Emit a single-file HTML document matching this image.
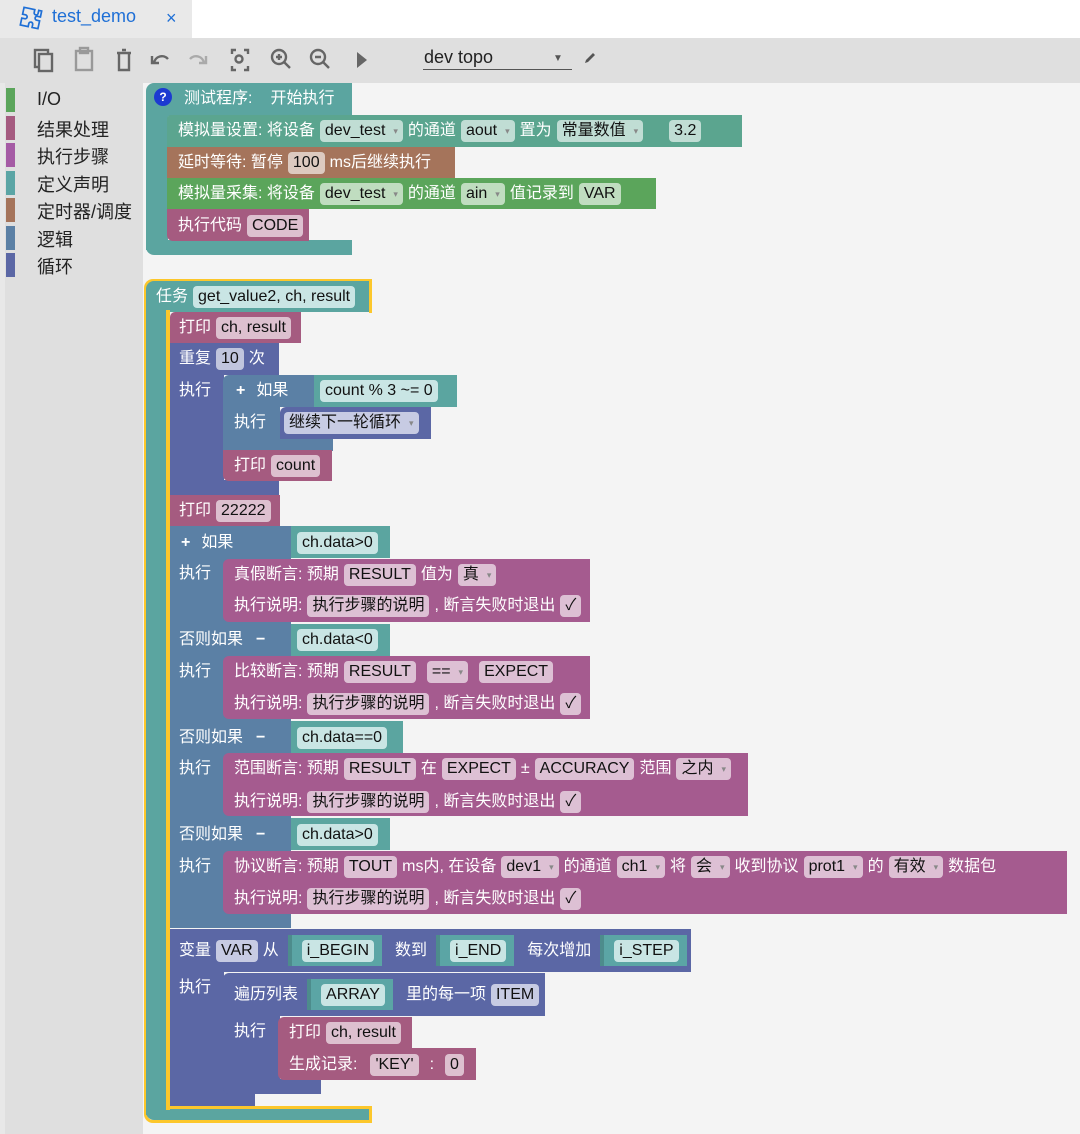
<!DOCTYPE html>
<html><head><meta charset="utf-8">
<style>
*{margin:0;padding:0;box-sizing:border-box}
body{width:1080px;height:1134px;overflow:hidden;background:#f4f4f4;font-family:"Liberation Sans","Noto Sans CJK SC",sans-serif;position:relative}
.a{position:absolute}
.r{position:absolute;display:flex;align-items:center;height:31px;color:#fff;font-size:16px;white-space:nowrap;gap:5px}
.r span{line-height:22px;height:22px;display:inline-flex;align-items:center}
.f{background:rgba(255,255,255,.62);color:#111;border-radius:4px;padding:0 5px;font-size:16px}
.dd:after{content:"▾";font-size:9px;color:#888;margin-left:8px}
.r span.v{display:inline-flex;align-items:center;height:31px;background:#5ba5a5;padding:0 8px 0 10px;margin-left:4px;border-left:4px solid rgba(0,0,0,.15)}
.v .f{background:#c9e5e4}
.cat{position:absolute;left:6px;width:9px;height:24px}
.cl{position:absolute;left:37px;font-size:18px;color:#222}
.y{position:absolute;background:#fcc72b}
</style></head><body>
<!-- top bar -->
<div class="a" style="left:0;top:0;width:1080px;height:38px;background:#fff"></div>
<div class="a" style="left:0;top:0;width:192px;height:38px;background:#e9e9e9"></div>
<svg class="a" style="left:19px;top:6px" width="24" height="24" viewBox="0 0 24 24"><path d="M9 3h5v3a2 2 0 0 0 4 0V3h3v6h-3a2 2 0 0 0 0 4h3v8h-6v-3a2 2 0 0 0-4 0v3H3v-7h3a2 2 0 0 0 0-4H3V3h6z" fill="none" stroke="#1e6fd6" stroke-width="1.7" transform="rotate(12 12 12)"/></svg>
<div class="a" style="left:52px;top:6px;font-size:18px;color:#1e6fd6">test_demo</div>
<div class="a" style="left:166px;top:8px;font-size:18px;color:#1e6fd6">×</div>
<!-- toolbar -->
<div class="a" style="left:0;top:38px;width:1080px;height:45px;background:#dfdfdf"></div>
<svg class="a" style="left:30px;top:44px" width="360" height="32" viewBox="0 0 360 32" fill="none" stroke="#666" stroke-width="2.4">
<rect x="5" y="6" width="13" height="17"/><rect x="9" y="10" width="13" height="17" fill="#dfdfdf"/>
<rect x="46" y="7" width="16" height="19" stroke="#999"/><rect x="50" y="4" width="8" height="5" stroke="#999"/>
<path d="M87 9h14M89 10v16h10V10M92 6h4"/>
<path d="M124 19a8 8 0 0 1 14-4M122 12v7h7"/>
<path d="M174 19a8 8 0 0 0-14-4M176 12v7h-7" stroke="#aaa"/>
<path d="M202 10V6h4M214 6h4v4M218 22v4h-4M206 26h-4v-4"/><circle cx="209" cy="15" r="3.5"/>
<circle cx="249" cy="13" r="7"/><path d="M254 18l6 6M246 13h6M249 10v6"/>
<circle cx="288" cy="13" r="7"/><path d="M293 18l6 6M285 13h6"/>
<path d="M327 8l10 8-10 8z" fill="#666" stroke="none"/>
</svg>
<div class="a" style="left:424px;top:47px;font-size:18px;color:#222">dev&nbsp;topo</div>
<div class="a" style="left:423px;top:69px;width:149px;height:1px;background:#555"></div>
<div class="a" style="left:553px;top:53px;font-size:10px;color:#555">▼</div>
<svg class="a" style="left:582px;top:50px" width="16" height="16"><path d="M3 13l1-3 7-7 2 2-7 7z" fill="#555"/></svg>
<!-- sidebar -->
<div class="a" style="left:0;top:83px;width:5px;height:1051px;background:#e8e8e8"></div>
<div class="a" style="left:5px;top:83px;width:138px;height:1051px;background:#dfdfdf"></div>
<div class="cat" style="top:88px;background:#5ba55b"></div><div class="cl" style="top:89px">I/O</div>
<div class="cat" style="top:116px;background:#a55b80"></div><div class="cl" style="top:116px">结果处理</div>
<div class="cat" style="top:143px;background:#a55ba5"></div><div class="cl" style="top:143px">执行步骤</div>
<div class="cat" style="top:171px;background:#5ba5a5"></div><div class="cl" style="top:171px">定义声明</div>
<div class="cat" style="top:198px;background:#a5745b"></div><div class="cl" style="top:198px">定时器/调度</div>
<div class="cat" style="top:226px;background:#5b80a5"></div><div class="cl" style="top:226px">逻辑</div>
<div class="cat" style="top:253px;background:#5b67a5"></div><div class="cl" style="top:253px">循环</div>

<!-- program block -->
<div class="a" style="left:146px;top:83px;width:206px;height:33px;background:#5ba5a0;border-radius:8px 0 0 0"></div>
<div class="a" style="left:146px;top:110px;width:22px;height:140px;background:#5ba5a0"></div>
<div class="a" style="left:146px;top:240px;width:206px;height:15px;background:#5ba5a0;border-radius:0 0 0 8px"></div>
<div class="a" style="left:154px;top:88px;width:18px;height:18px;border-radius:50%;background:#1c3ad1;color:#fff;font-size:12px;font-weight:bold;text-align:center;line-height:18px">?</div>
<div class="r" style="left:184px;top:83px;gap:18px"><span>测试程序:</span><span>开始执行</span></div>
<div class="a" style="left:167px;top:115px;width:575px;height:32px;background:#5ba58f;border-radius:4px 0 0 0"></div>
<div class="r" style="left:178px;top:115px"><span>模拟量设置: 将设备</span><span class="f dd">dev_test</span><span>的通道</span><span class="f dd">aout</span><span>置为</span><span class="f dd">常量数值</span><span style="width:16px"></span><span class="f">3.2</span></div>
<div class="a" style="left:167px;top:147px;width:288px;height:31px;background:#a5745b"></div>
<div class="r" style="left:178px;top:147px"><span>延时等待: 暂停</span><span class="f">100</span><span>ms后继续执行</span></div>
<div class="a" style="left:167px;top:178px;width:489px;height:31px;background:#5ba55b"></div>
<div class="r" style="left:178px;top:178px"><span>模拟量采集: 将设备</span><span class="f dd">dev_test</span><span>的通道</span><span class="f dd">ain</span><span>值记录到</span><span class="f">VAR</span></div>
<div class="a" style="left:167px;top:209px;width:142px;height:32px;background:#a55b80;border-radius:0 0 0 6px"></div>
<div class="r" style="left:178px;top:210px"><span>执行代码</span><span class="f">CODE</span></div>

<!-- task block -->
<div class="a" style="left:144px;top:279px;width:228px;height:844px;border:3px solid #fcc72b;border-right:none;border-radius:9px 0 0 9px"></div>
<div class="a" style="left:146px;top:281px;width:224px;height:31px;background:#5ba5a0;border-radius:8px 0 0 0"></div>
<div class="a" style="left:146px;top:305px;width:22px;height:810px;background:#5ba5a0"></div>
<div class="a" style="left:146px;top:1108px;width:224px;height:12px;background:#5ba5a0;border-radius:0 0 0 8px"></div>
<div class="y" style="left:369px;top:279px;width:3px;height:34px"></div>
<div class="y" style="left:166px;top:310px;width:206px;height:3px;display:none"></div>
<div class="y" style="left:166px;top:310px;width:4px;height:800px"></div>
<div class="y" style="left:166px;top:1106px;width:206px;height:3px"></div>
<div class="y" style="left:369px;top:1106px;width:3px;height:17px"></div>
<div class="r" style="left:156px;top:281px"><span>任务</span><span class="f" style="background:#c9e5e4">get_value2, ch, result</span></div>

<!-- print -->
<div class="a" style="left:170px;top:312px;width:131px;height:31px;background:#a55b80;border-radius:5px 0 0 0"></div>
<div class="r" style="left:179px;top:312px"><span>打印</span><span class="f">ch, result</span></div>
<!-- repeat -->
<div class="a" style="left:170px;top:343px;width:109px;height:32px;background:#5b67a5"></div>
<div class="a" style="left:170px;top:370px;width:54px;height:125px;background:#5b67a5"></div>
<div class="a" style="left:170px;top:480px;width:109px;height:15px;background:#5b67a5"></div>
<div class="r" style="left:179px;top:343px"><span>重复</span><span class="f">10</span><span>次</span></div>
<div class="r" style="left:179px;top:375px"><span>执行</span></div>
<!-- inner if -->
<div class="a" style="left:223px;top:375px;width:91px;height:32px;background:#5b80a5;border-radius:6px 0 0 0"></div>
<div class="a" style="left:314px;top:375px;width:143px;height:32px;background:#5ba5a0"></div>
<div class="a" style="left:223px;top:405px;width:57px;height:45px;background:#5b80a5"></div>
<div class="a" style="left:223px;top:437px;width:110px;height:14px;background:#5b80a5"></div>
<div class="r" style="left:236px;top:375px"><span style="font-weight:bold">+</span><span style="margin-left:6px">如果</span></div>
<div class="r" style="left:320px;top:375px"><span class="f" style="background:#c9e5e4">count % 3 ~= 0</span></div>
<div class="r" style="left:234px;top:407px"><span>执行</span></div>
<div class="a" style="left:280px;top:407px;width:151px;height:32px;background:#5b67a5;border-radius:6px 0 0 0"></div>
<div class="r" style="left:284px;top:407px"><span class="f dd" style="background:#c7cbe3">继续下一轮循环</span></div>
<div class="a" style="left:223px;top:450px;width:109px;height:31px;background:#a55b80;border-radius:0 0 0 6px"></div>
<div class="r" style="left:234px;top:450px"><span>打印</span><span class="f">count</span></div>
<!-- print 22222 -->
<div class="a" style="left:170px;top:495px;width:110px;height:31px;background:#a55b80"></div>
<div class="r" style="left:179px;top:495px"><span>打印</span><span class="f">22222</span></div>
<!-- if chain -->
<div class="a" style="left:170px;top:526px;width:121px;height:402px;background:#5b80a5"></div>
<div class="a" style="left:291px;top:526px;width:99px;height:32px;background:#5ba5a0"></div>
<div class="a" style="left:291px;top:624px;width:99px;height:32px;background:#5ba5a0"></div>
<div class="a" style="left:291px;top:721px;width:112px;height:32px;background:#5ba5a0"></div>
<div class="a" style="left:291px;top:818px;width:99px;height:32px;background:#5ba5a0"></div>
<div class="r" style="left:181px;top:527px"><span style="font-weight:bold">+</span><span style="margin-left:6px">如果</span></div>
<div class="r" style="left:297px;top:527px"><span class="f" style="background:#c9e5e4">ch.data&gt;0</span></div>
<div class="r" style="left:179px;top:624px"><span>否则如果</span><span style="margin-left:8px;font-weight:bold">−</span></div>
<div class="r" style="left:297px;top:624px"><span class="f" style="background:#c9e5e4">ch.data&lt;0</span></div>
<div class="r" style="left:179px;top:722px"><span>否则如果</span><span style="margin-left:8px;font-weight:bold">−</span></div>
<div class="r" style="left:297px;top:722px"><span class="f" style="background:#c9e5e4">ch.data==0</span></div>
<div class="r" style="left:179px;top:819px"><span>否则如果</span><span style="margin-left:8px;font-weight:bold">−</span></div>
<div class="r" style="left:297px;top:819px"><span class="f" style="background:#c9e5e4">ch.data&gt;0</span></div>
<div class="r" style="left:179px;top:558px"><span>执行</span></div>
<div class="r" style="left:179px;top:656px"><span>执行</span></div>
<div class="r" style="left:179px;top:753px"><span>执行</span></div>
<div class="r" style="left:179px;top:851px"><span>执行</span></div>
<!-- assertions -->
<div class="a" style="left:223px;top:559px;width:367px;height:63px;background:#a55b8f;border-radius:6px 0 0 6px"></div>
<div class="r" style="left:234px;top:559px"><span>真假断言: 预期</span><span class="f">RESULT</span><span>值为</span><span class="f dd">真</span></div>
<div class="r" style="left:234px;top:590px"><span>执行说明:</span><span class="f">执行步骤的说明</span><span>, 断言失败时退出</span><span class="f">✓</span></div>
<div class="a" style="left:223px;top:656px;width:367px;height:63px;background:#a55b8f;border-radius:6px 0 0 6px"></div>
<div class="r" style="left:234px;top:656px"><span>比较断言: 预期</span><span class="f">RESULT</span><span class="f dd" style="margin-left:6px">==</span><span class="f" style="margin-left:6px">EXPECT</span></div>
<div class="r" style="left:234px;top:688px"><span>执行说明:</span><span class="f">执行步骤的说明</span><span>, 断言失败时退出</span><span class="f">✓</span></div>
<div class="a" style="left:223px;top:753px;width:525px;height:63px;background:#a55b8f;border-radius:6px 0 0 6px"></div>
<div class="r" style="left:234px;top:753px"><span>范围断言: 预期</span><span class="f">RESULT</span><span>在</span><span class="f">EXPECT</span><span>±</span><span class="f">ACCURACY</span><span>范围</span><span class="f dd">之内</span></div>
<div class="r" style="left:234px;top:786px"><span>执行说明:</span><span class="f">执行步骤的说明</span><span>, 断言失败时退出</span><span class="f">✓</span></div>
<div class="a" style="left:223px;top:851px;width:844px;height:63px;background:#a55b8f;border-radius:6px 0 0 6px"></div>
<div class="r" style="left:234px;top:851px"><span>协议断言: 预期</span><span class="f">TOUT</span><span>ms内, 在设备</span><span class="f dd">dev1</span><span>的通道</span><span class="f dd">ch1</span><span>将</span><span class="f dd">会</span><span>收到协议</span><span class="f dd">prot1</span><span>的</span><span class="f dd">有效</span><span>数据包</span></div>
<div class="r" style="left:234px;top:883px"><span>执行说明:</span><span class="f">执行步骤的说明</span><span>, 断言失败时退出</span><span class="f">✓</span></div>
<!-- for loop -->
<div class="a" style="left:170px;top:929px;width:521px;height:43px;background:#5b67a5"></div>
<div class="a" style="left:170px;top:970px;width:54px;height:136px;background:#5b67a5"></div>
<div class="a" style="left:170px;top:1094px;width:85px;height:12px;background:#5b67a5;border-radius:0 0 0 6px"></div>
<div class="r" style="left:179px;top:935px"><span>变量</span><span class="f" style="background:#c7cbe3">VAR</span><span>从</span><span class="v"><span class="f">i_BEGIN</span></span><span style="margin-left:8px">数到</span><span class="v"><span class="f">i_END</span></span><span style="margin-left:8px">每次增加</span><span class="v"><span class="f">i_STEP</span></span></div>
<div class="r" style="left:179px;top:972px"><span>执行</span></div>
<div class="a" style="left:223px;top:973px;width:322px;height:43px;background:#5b67a5;border-radius:6px 0 0 0"></div>
<div class="a" style="left:223px;top:1014px;width:57px;height:80px;background:#5b67a5"></div>
<div class="a" style="left:223px;top:1079px;width:98px;height:15px;background:#5b67a5;border-radius:0 0 0 6px"></div>
<div class="r" style="left:234px;top:979px"><span>遍历列表</span><span class="v"><span class="f">ARRAY</span></span><span style="margin-left:8px">里的每一项</span><span class="f" style="background:#c7cbe3">ITEM</span></div>
<div class="r" style="left:234px;top:1016px"><span>执行</span></div>
<div class="a" style="left:278px;top:1017px;width:134px;height:31px;background:#a55b80;border-radius:6px 0 0 0"></div>
<div class="r" style="left:289px;top:1017px"><span>打印</span><span class="f">ch, result</span></div>
<div class="a" style="left:278px;top:1048px;width:198px;height:32px;background:#a55b80;border-radius:0 0 0 6px"></div>
<div class="r" style="left:289px;top:1049px"><span>生成记录:</span><span class="f" style="margin-left:8px">'KEY'</span><span style="margin:0 6px">:</span><span class="f">0</span></div>
</body></html>
